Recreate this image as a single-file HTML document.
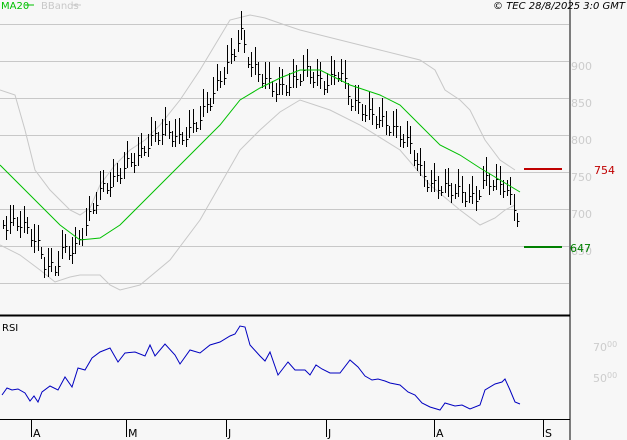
<!DOCTYPE html>
<html><head><meta charset="utf-8"><style>
html,body{margin:0;padding:0;background:#f7f7f7;}
svg{display:block;font-family:"DejaVu Sans","Liberation Sans",sans-serif;}
</style></head><body>
<svg id="s" width="627" height="440" viewBox="0 0 627 440" xmlns="http://www.w3.org/2000/svg">
<rect width="627" height="440" fill="#f7f7f7"/>
<g stroke="#c8c8c8" stroke-width="1">
<line x1="0" y1="24.5" x2="569" y2="24.5"/><line x1="0" y1="61.5" x2="569" y2="61.5"/>
<line x1="0" y1="98.5" x2="569" y2="98.5"/><line x1="0" y1="135.5" x2="569" y2="135.5"/>
<line x1="0" y1="172.5" x2="569" y2="172.5"/><line x1="0" y1="209.5" x2="569" y2="209.5"/>
<line x1="0" y1="246.5" x2="569" y2="246.5"/><line x1="0" y1="283.5" x2="569" y2="283.5"/>
</g>
<g fill="#cccccc" font-size="11">
<text x="571" y="70">900</text><text x="571" y="107">850</text><text x="571" y="144">800</text>
<text x="571" y="181">750</text><text x="571" y="218">700</text><text x="571" y="255">650</text>
<text x="593" y="351">70<tspan font-size="8" dy="-4">00</tspan></text>
<text x="593" y="382">50<tspan font-size="8" dy="-4">00</tspan></text>
</g>
<polyline fill="none" stroke="#c8c8c8" points="0,90 15,95 25,130 35,170 50,190 60,200 70,210 80,215 90,208 100,185 115,165 130,150 145,140 160,125 180,100 200,70 215,45 230,20 250,15 265,18 285,25 300,30 340,40 380,50 420,60 435,70 445,90 460,100 470,110 485,140 500,160 515,170"/>
<polyline fill="none" stroke="#c8c8c8" points="0,245 20,255 40,270 55,282 70,277 80,275 100,275 110,285 120,290 140,285 170,260 200,220 220,185 240,150 260,130 280,112 300,100 330,110 360,125 400,150 430,185 460,210 480,225 495,218 505,210 515,205"/>
<g id="bars" stroke="#000" stroke-width="1"></g>
<polyline fill="none" stroke="#00c000" points="0,165 20,185 40,205 60,225 80,240 100,238 120,225 140,205 170,175 200,145 220,125 240,100 260,88 280,78 300,70 320,70 350,85 380,95 400,105 420,125 440,145 460,155 480,168 500,180 520,192"/>
<line x1="570" y1="0" x2="570" y2="440" stroke="#000"/>
<line x1="0" y1="315.5" x2="570" y2="315.5" stroke="#000" stroke-width="2"/>
<line x1="0" y1="419.5" x2="570" y2="419.5" stroke="#000"/>
<line x1="524" y1="169" x2="562" y2="169" stroke="#c00000" stroke-width="2"/>
<text x="594" y="174" fill="#c00000" font-size="11">754</text>
<line x1="524" y1="247" x2="562" y2="247" stroke="#008000" stroke-width="2"/>
<text x="570" y="252" fill="#008000" font-size="11">647</text>
<text x="1" y="9" fill="#00c000" font-size="10">MA20</text>
<line x1="25" y1="5" x2="34" y2="5" stroke="#00c000"/>
<text x="41" y="9" fill="#c8c8c8" font-size="10">BBands</text>
<line x1="72" y1="5" x2="81" y2="5" stroke="#c8c8c8"/>
<text x="625" y="9" fill="#000" font-size="10" font-style="italic" text-anchor="end">© TEC 28/8/2025 3:0 GMT</text>
<text x="2" y="331" fill="#000" font-size="10">RSI</text>
<polyline fill="none" stroke="#0000c0" points="2,395 7,388 12,390 18,389 25,393 30,401 34,396 38,402 42,392 50,386 58,390 65,377 72,387 78,368 85,370 92,358 100,352 110,348 118,362 125,353 135,352 145,356 150,345 155,356 165,344 175,355 180,364 190,350 200,353 210,345 220,342 230,336 235,334 240,326 245,327 250,345 260,356 265,361 270,352 278,375 288,362 295,370 305,370 310,375 316,365 322,369 330,373 340,373 350,360 358,367 365,376 372,380 378,379 385,381 390,383 400,385 408,392 415,395 422,403 430,407 440,410 445,403 455,406 462,405 470,409 480,405 485,390 495,384 502,382 505,379 510,390 515,402 520,404"/>
<g stroke="#000"><line x1="31.5" y1="419" x2="31.5" y2="437"/><line x1="126.5" y1="419" x2="126.5" y2="437"/><line x1="226.5" y1="419" x2="226.5" y2="437"/><line x1="326.5" y1="419" x2="326.5" y2="437"/><line x1="434.5" y1="419" x2="434.5" y2="437"/><line x1="543.5" y1="419" x2="543.5" y2="437"/></g>
<g fill="#000" font-size="11"><text x="33" y="437">A</text><text x="128" y="437">M</text><text x="228" y="437">J</text><text x="328" y="437">J</text><text x="436" y="437">A</text><text x="545" y="437">S</text></g>
</svg>
<script>
var k=[[3,225],[20,222],[35,240],[45,265],[55,270],[62,250],[75,250],[90,215],[100,190],[115,180],[125,165],[140,155],[150,140],[165,130],[180,140],[195,125],[210,100],[225,70],[235,50],[240,30],[250,65],[265,80],[275,90],[290,85],[305,70],[315,78],[325,85],[340,70],[350,100],[365,112],[380,120],[395,130],[410,145],[420,170],[430,185],[445,188],[460,192],[475,200],[485,178],[495,185],[505,185],[512,205],[518,218]];
function f(x){for(var i=0;i<k.length-1;i++){if(x<=k[i+1][0]){var t=(x-k[i][0])/(k[i+1][0]-k[i][0]);return k[i][1]+t*(k[i+1][1]-k[i][1]);}}return k[k.length-1][1];}
var g=document.getElementById('bars'),h='';
for(var x=3,i=0;x<=518;x+=3.45,i++){var xx=Math.round(x)+0.5;var c=f(x)+Math.sin(i*1.7)*6;var r=9+Math.abs(Math.sin(i*2.3))*20;var hi=c-r*0.6,lo=c+r*0.4;
h+='<line x1="'+xx+'" y1="'+hi.toFixed(0)+'" x2="'+xx+'" y2="'+lo.toFixed(0)+'"/><line x1="'+xx+'" y1="'+c.toFixed(0)+'.5" x2="'+(xx+2)+'" y2="'+c.toFixed(0)+'.5"/>';}
g.innerHTML=h;
</script>
</body></html>
